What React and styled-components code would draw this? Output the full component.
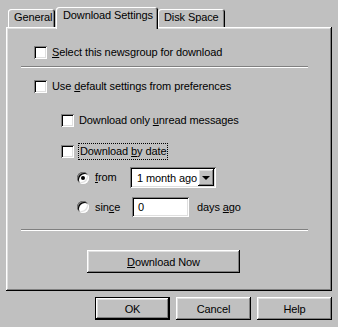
import React from 'react';
import styled, { createGlobalStyle, css } from 'styled-components';

const GlobalStyle = createGlobalStyle`
  html, body { margin: 0; padding: 0; background: #c0c0c0; }
  body { font-family: "Liberation Sans", Arial, sans-serif; font-size: 11px; letter-spacing: -0.1px; color: #000; }
  * { box-sizing: border-box; }
`;

const raised = css`
  box-shadow: inset -1px -1px #000, inset 1px 1px #fff, inset -2px -2px #808080, inset 2px 2px #dfdfdf;
`;
const sunken = css`
  box-shadow: inset 1px 1px #808080, inset -1px -1px #fff, inset 2px 2px #000, inset -2px -2px #dfdfdf;
`;

const Dialog = styled.div`
  width: 338px;
  height: 327px;
  padding: 7px 6px 0 6px;
  display: flex;
  flex-direction: column;
  background: #c0c0c0;
`;

const TabStrip = styled.div`
  display: flex;
  align-items: flex-start;
  height: 20px;
  padding-left: 2px;
`;

const Tab = styled.div`
  position: relative;
  z-index: ${p => (p.$active ? 2 : 1)};
  width: ${p => p.$w}px;
  height: ${p => (p.$active ? 22 : 18)}px;
  margin-top: ${p => (p.$active ? 0 : 2)}px;
  margin-left: ${p => p.$ml || 0}px;
  background: #c0c0c0;
  border-radius: 3px 3px 0 0;
  box-shadow: inset 1px 1px #fff, inset -1px 0 #000, inset -2px 0 #808080;
  padding: 2px 0 0 ${p => (p.$active ? 7 : 6)}px;
  line-height: 13px;
  white-space: nowrap;
`;

const Panel = styled.div`
  height: 264px;
  padding: 2px;
  display: flex;
  flex-direction: column;
  background: #c0c0c0;
  ${raised}
`;

const Row = styled.div`
  display: flex;
  align-items: center;
  height: ${p => p.$h || 13}px;
  margin-top: ${p => p.$top}px;
  padding-left: ${p => p.$left}px;
  white-space: nowrap;
`;

const Separator = styled.div`
  margin-top: ${p => p.$top}px;
  margin-left: 13px;
  width: 287px;
  height: 2px;
  border-top: 1px solid #808080;
  border-bottom: 1px solid #fff;
`;

const CheckBox = styled.span`
  flex-shrink: 0;
  width: 13px;
  height: 13px;
  background: #fff;
  ${sunken}
`;

const Radio = styled.span`
  flex-shrink: 0;
  width: 12px;
  height: 12px;
  border-radius: 50%;
  background: #fff;
  box-shadow: inset 1px 1px #808080, inset -1px -1px #fff, inset 2px 2px #000, inset -2px -2px #dfdfdf;
  display: flex;
  align-items: center;
  justify-content: center;
  &::after {
    content: '';
    display: ${p => (p.$checked ? 'block' : 'none')};
    width: 4px;
    height: 4px;
    border-radius: 50%;
    background: #000;
  }
`;

const Label = styled.span`
  margin-left: ${p => p.$gap ?? 5}px;
  width: ${p => (p.$w ? `${p.$w}px` : 'auto')};
  line-height: 13px;
`;

const FocusLabel = styled.span`
  margin-left: 4px;
  padding: 0 1px;
  height: 17px;
  line-height: 15px;
  border: 1px dotted #000;
`;

const Select = styled.div`
  display: flex;
  align-items: center;
  width: 86px;
  height: 21px;
  padding: 2px;
  background: #fff;
  ${sunken}
`;

const SelectText = styled.span`
  flex: 1;
  padding-left: 5px;
`;

const ArrowButton = styled.span`
  width: 16px;
  height: 17px;
  background: #c0c0c0;
  display: flex;
  align-items: center;
  justify-content: center;
  ${raised}
  &::after {
    content: '';
    width: 0;
    height: 0;
    border-left: 4px solid transparent;
    border-right: 4px solid transparent;
    border-top: 4px solid #000;
    margin-top: 1px;
  }
`;

const TextField = styled.div`
  width: 57px;
  height: 20px;
  padding: 2px 0 0 6px;
  line-height: 16px;
  background: #fff;
  ${sunken}
`;

const Button = styled.button`
  width: ${p => p.$w || 75}px;
  height: 23px;
  padding: 0;
  margin: 0;
  font-family: inherit;
  font-size: 11px;
  letter-spacing: inherit;
  color: #000;
  background: #c0c0c0;
  border: none;
  ${p =>
    p.$default
      ? css`
          box-shadow: inset 0 0 0 1px #000, inset -2px -2px #000, inset 2px 2px #fff, inset -3px -3px #808080, inset 3px 3px #dfdfdf;
        `
      : raised}
`;

const ButtonBar = styled.div`
  display: flex;
  justify-content: flex-end;
  gap: 6px;
  margin-top: 6px;
`;

export default function App() {
  return (
    <>
      <GlobalStyle />
      <Dialog>
        <TabStrip>
          <Tab $w={47}>General</Tab>
          <Tab $w={102} $ml={1} $active>Download Settings</Tab>
          <Tab $w={67}>Disk Space</Tab>
        </TabStrip>
        <Panel>
          <Row $top={17} $left={26}>
            <CheckBox />
            <Label><u>S</u>elect this newsgroup for download</Label>
          </Row>
          <Separator $top={7} />
          <Row $top={12} $left={26}>
            <CheckBox />
            <Label>Use <u>d</u>efault settings from preferences</Label>
          </Row>
          <Row $top={21} $left={53}>
            <CheckBox />
            <Label>Download only <u>u</u>nread messages</Label>
          </Row>
          <Row $top={18} $left={53}>
            <CheckBox />
            <FocusLabel>Download <u>b</u>y date</FocusLabel>
          </Row>
          <Row $top={9} $h={21} $left={69}>
            <Radio $checked />
            <Label $gap={6} $w={35}><u>f</u>rom</Label>
            <Select>
              <SelectText>1 month ago</SelectText>
              <ArrowButton />
            </Select>
          </Row>
          <Row $top={9} $h={20} $left={69}>
            <Radio />
            <Label $gap={6} $w={37}>sin<u>c</u>e</Label>
            <TextField>0</TextField>
            <Label $gap={8}>days <u>a</u>go</Label>
          </Row>
          <Separator $top={12} />
          <Row $top={19} $h={23} $left={79}>
            <Button $w={153}><u>D</u>ownload Now</Button>
          </Row>
        </Panel>
        <ButtonBar>
          <Button $default>OK</Button>
          <Button>Cancel</Button>
          <Button>Help</Button>
        </ButtonBar>
      </Dialog>
    </>
  );
}
